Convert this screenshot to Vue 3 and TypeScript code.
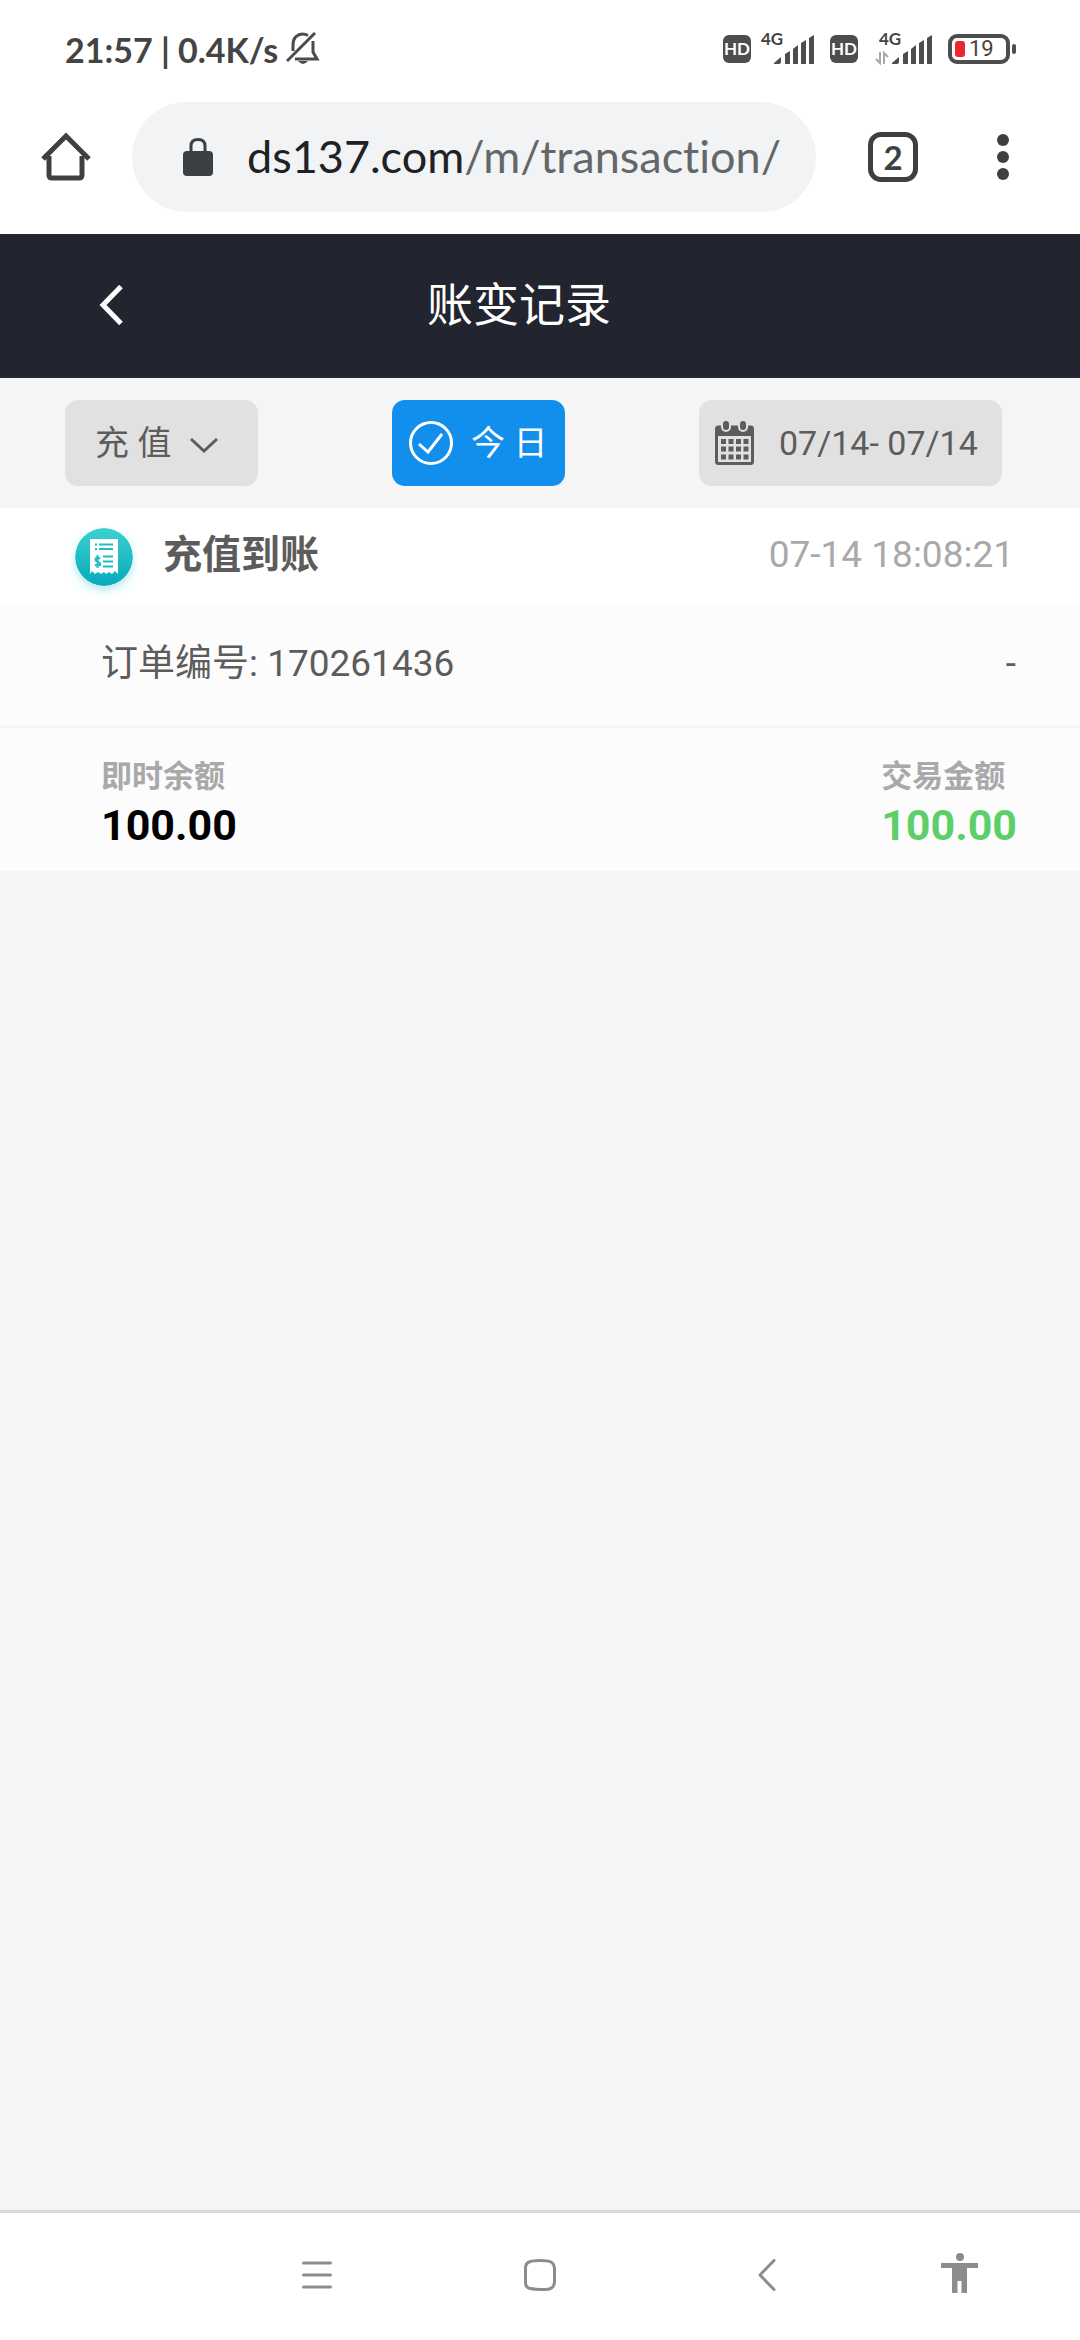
<script setup lang="ts">
import { ref } from 'vue'

interface TransactionRecord {
  title: string
  time: string
  orderNo: string
  remark: string
  balance: string
  amount: string
}

const kind = ref('deposit')
const todayOnly = ref(true)
const dateRange = ref('07/14- 07/14')

const records = ref<TransactionRecord[]>([
  {
    title: '充值到账',
    time: '07-14 18:08:21',
    orderNo: '170261436',
    remark: '-',
    balance: '100.00',
    amount: '100.00',
  },
])
</script>

<template>
  <div class="screen">
    <div class="status">
      <div class="status-left">
        <span>21:57 | 0.4K/s</span>
        <svg class="bell" viewBox="0 0 34 34" aria-hidden="true">
          <path d="M22 3.500Q15 0 9.500 5Q7 8 7 13V19M27 9V20L31 27H9" fill="none" stroke="#4b4b4b" stroke-width="3" />
          <path d="M1 29L29 1" stroke="#4b4b4b" stroke-width="3" />
          <path d="M12 29H22Q17 35 12 29Z" fill="#4b4b4b" />
        </svg>
      </div>
      <div class="status-right">
        <span class="hd">HD</span>
        <div class="signal">
          <span class="net">4G</span>
          <svg class="bars" viewBox="0 0 54 32" aria-hidden="true">
            <g fill="#4d4d4d">
              <path d="M14 30L21 24V29Q21 31 19 31H14Z" />
              <path d="M25 21L30 18V31H25ZM33 16L38 12V31H33ZM41 10L46 7V31H41ZM49 5L54 2V31H49Z" />
            </g>
          </svg>
        </div>
        <span class="hd second">HD</span>
        <div class="signal">
          <span class="net">4G</span>
          <svg class="bars" viewBox="0 0 54 32" aria-hidden="true">
            <g fill="#4d4d4d">
              <path d="M14 30L21 24V29Q21 31 19 31H14Z" />
              <path d="M25 21L30 18V31H25ZM33 16L38 12V31H33ZM41 10L46 7V31H41ZM49 5L54 2V31H49Z" />
            </g>
            <path d="M2 19V30L-2 26M6 31V20L10 24" fill="none" stroke="#a8a8a8" stroke-width="2" />
          </svg>
        </div>
        <div class="battery"><i class="charge"></i><span>19</span></div>
      </div>
    </div>

    <div class="browser">
      <button class="tool home" type="button" aria-label="Home">
        <svg viewBox="0 0 50 50" width="50" height="50">
          <path d="M8 24V43Q8 46 11 46H38Q41 46 41 43V24" fill="none" stroke="#3c4043" stroke-width="5" />
          <path d="M2 27L25 4L48 27" fill="none" stroke="#3c4043" stroke-width="5" />
        </svg>
      </button>
      <button class="address" type="button">
        <svg viewBox="0 0 30 40" width="30" height="40" aria-hidden="true">
          <rect x="0" y="14" width="30" height="25" rx="4" fill="#3c4043" />
          <path d="M8 15V9Q8 2.500 15 2.500T22 9V15" fill="none" stroke="#3c4043" stroke-width="3" />
        </svg>
        <span class="url">ds137.com<span class="path">/m/transaction/</span></span>
      </button>
      <button class="tabs" type="button">2</button>
      <button class="tool menu" type="button" aria-label="Menu">
        <svg viewBox="0 0 12 46" width="12" height="46">
          <g fill="#3c4043">
            <circle cx="6" cy="6" r="6" /><circle cx="6" cy="23" r="6" /><circle cx="6" cy="40" r="6" />
          </g>
        </svg>
      </button>
    </div>

    <header class="header">
      <button class="tool back" type="button" aria-label="返回">
        <svg viewBox="0 0 24 40" width="24" height="40">
          <path d="M22 1.500L4 20L22 38.500" fill="none" stroke="#fff" stroke-width="5" />
        </svg>
      </button>
      <h1>账变记录</h1>
    </header>

    <main class="content">
      <div class="filters">
        <div class="kind">
          <select v-model="kind" aria-label="类型">
            <option value="deposit">充 值</option>
          </select>
          <svg class="caret" viewBox="0 0 28 16" aria-hidden="true">
            <path d="M1 2L14 14L27 2" fill="none" stroke="#5c5c5c" stroke-width="3" />
          </svg>
        </div>
        <button class="today" type="button" :aria-pressed="todayOnly" @click="todayOnly = !todayOnly">
          <svg viewBox="0 0 44 44" width="44" height="44" aria-hidden="true">
            <circle cx="22" cy="22" r="20.500" fill="none" stroke="#fff" stroke-width="3" />
            <path d="M10 23L19 31L33 13" fill="none" stroke="#fff" stroke-width="3" />
          </svg>
          <span>今 日</span>
        </button>
        <button class="range" type="button">
          <svg viewBox="0 0 40 44" width="40" height="44" aria-hidden="true">
            <rect x="1.500" y="6" width="36" height="36.500" rx="2" fill="none" stroke="#5c5c5c" stroke-width="3" />
            <rect x="1" y="5" width="37" height="10" fill="#5c5c5c" />
            <rect x="6" y="-1" width="10" height="12" rx="5" fill="#e1e1e1" />
            <rect x="23" y="-1" width="10" height="12" rx="5" fill="#e1e1e1" />
            <rect x="8" y="0" width="6" height="9" rx="3" fill="#5c5c5c" />
            <rect x="25" y="0" width="6" height="9" rx="3" fill="#5c5c5c" />
            <path d="M6 20.500H34M6 28H34M6 36H34" stroke="#5c5c5c" stroke-width="5" stroke-dasharray="5 2.500" />
          </svg>
          <span>{{ dateRange }}</span>
        </button>
      </div>

      <article v-for="record in records" :key="record.orderNo" class="record">
        <div class="record-head">
          <svg class="receipt" viewBox="0 0 58 58" aria-hidden="true">
            <defs>
              <linearGradient id="teal" x1="0" y1="0" x2="0" y2="1">
                <stop offset="0" stop-color="#3fd0cf" />
                <stop offset="1" stop-color="#06a9bc" />
              </linearGradient>
            </defs>
            <circle cx="29" cy="29" r="29" fill="url(#teal)" />
            <path d="M15 11H43V46L40 43L37 46L34 44L31 46L29 44L26 46L23 44L20 46L17 43L15 46Z" fill="#fff" />
            <path d="M20 16.500H22M24 16.500H38M20 21H22M24 21H38M28 28.500H38M28 33.500H38M28 38.500H38" stroke="#1fbcc5" stroke-width="2" />
            <path d="M25 31Q24 29.500 22.500 29.500Q20 30 20.500 32Q21 33 23 34Q26 35 25 37Q22 39 20 36.500M22.500 27V40" fill="none" stroke="#1fbcc5" stroke-width="2" />
          </svg>
          <h2>{{ record.title }}</h2>
          <time>{{ record.time }}</time>
        </div>
        <div class="order">
          <span>订单编号: {{ record.orderNo }}</span>
          <span>{{ record.remark }}</span>
        </div>
        <dl class="sums">
          <div>
            <dt>即时余额</dt>
            <dd>{{ record.balance }}</dd>
          </div>
          <div>
            <dt>交易金额</dt>
            <dd class="gain">{{ record.amount }}</dd>
          </div>
        </dl>
      </article>
    </main>

    <nav class="system">
      <button class="tool" type="button" aria-label="Recents">
        <svg viewBox="0 0 32 32" width="32" height="32">
          <path d="M2.500 4H29.500M2.500 16H29.500M2.500 28H29.500" stroke="#8c8c8c" stroke-width="3" stroke-linecap="round" />
        </svg>
      </button>
      <button class="tool" type="button" aria-label="Home screen">
        <svg viewBox="0 0 32 32" width="32" height="32">
          <path d="M16 1.500Q24 1.500 27 3T30.500 9V23Q30.500 27 27.500 29T16 30.500T4.500 29T1.500 23V9Q1.500 4.500 5 3T16 1.500Z" fill="none" stroke="#8c8c8c" stroke-width="3" />
        </svg>
      </button>
      <button class="tool" type="button" aria-label="Back">
        <svg viewBox="0 0 18 32" width="18" height="32">
          <path d="M16 1.500L2 16L16 30.500" fill="none" stroke="#8c8c8c" stroke-width="3" stroke-linecap="round" stroke-linejoin="round" />
        </svg>
      </button>
      <button class="tool person" type="button" aria-label="Accessibility">
        <svg viewBox="0 0 37 44" width="37" height="44">
          <circle cx="19" cy="4" r="4" fill="#8c8c8c" />
          <path d="M0 10H37V15H26V40H20.500V28H16.500V40H11V15H0Z" fill="#8c8c8c" />
        </svg>
      </button>
    </nav>
  </div>
</template>

<style>
body {
  background: #f5f5f5;
}
</style>

<style scoped>
.screen {
  display: flex;
  flex-direction: column;
  min-height: 100vh;
  background: #f5f5f5;
  color: #5c5c5c;
  font-family: Roboto, "Noto Sans CJK SC", sans-serif;
}

.screen * {
  box-sizing: border-box;
}

button,
select {
  margin: 0;
  padding: 0;
  border: 0;
  background: none;
  color: inherit;
  font: inherit;
}

svg {
  display: block;
  flex: none;
}

.tool {
  display: flex;
  align-items: center;
  justify-content: center;
}

h1,
h2,
dl,
dd {
  margin: 0;
}

.status {
  display: flex;
  align-items: center;
  justify-content: space-between;
  height: 98px;
  padding: 0 64px 0 65px;
  background: #fff;
  color: #444;
  font-family: Lato, sans-serif;
}

.status-left {
  display: flex;
  align-items: center;
  gap: 8px;
  font-size: 34px;
  font-weight: 700;
  white-space: nowrap;
}

.bell {
  width: 34px;
  height: 34px;
}

.status-right {
  display: flex;
  align-items: center;
}

.hd {
  width: 28px;
  height: 28px;
  border-radius: 6px;
  background: #4d4d4d;
  color: #fff;
  font-size: 17px;
  font-weight: 700;
  line-height: 28px;
  text-align: center;
}

.second {
  margin-left: 16px;
}

.signal {
  position: relative;
  margin-left: 9px;
}

.net {
  position: absolute;
  top: -2px;
  left: 1px;
  font-size: 17px;
  font-weight: 700;
  line-height: 16px;
}

.bars {
  width: 54px;
  height: 32px;
  overflow: visible;
}

.second + .signal {
  margin-left: 20px;
}

.battery {
  position: relative;
  display: flex;
  align-items: center;
  gap: 4px;
  width: 62px;
  height: 30px;
  margin: 0 6px 0 16px;
  padding: 0 3px;
  border: 4px solid #4d4d4d;
  border-radius: 9px;
  font-family: Roboto, sans-serif;
  font-size: 22px;
  line-height: 22px;
}

.battery::after {
  position: absolute;
  top: 6px;
  right: -10px;
  width: 4px;
  height: 10px;
  border-radius: 2px;
  background: #4d4d4d;
  content: "";
}

.charge {
  width: 10px;
  height: 16px;
  border-radius: 3px;
  background: #e8292d;
}

.browser {
  display: flex;
  align-items: center;
  height: 136px;
  padding: 0 71px 18px 41px;
  background: #fff;
  color: #3c4043;
  font-family: Lato, sans-serif;
}

.address {
  display: flex;
  flex: 1;
  align-items: center;
  gap: 34px;
  min-width: 0;
  height: 110px;
  margin: 0 52px 0 41px;
  padding: 0 28px 0 51px;
  border-radius: 55px;
  background: #f1f3f4;
}

.url {
  overflow: hidden;
  padding-bottom: 2px;
  color: #202124;
  font-size: 45px;
  font-variant-ligatures: none;
  line-height: 60px;
  white-space: nowrap;
}

.path {
  color: #64676a;
}

.tabs {
  width: 50px;
  height: 50px;
  margin-right: 79px;
  border: 5px solid #3c4043;
  border-radius: 13px;
  font-size: 33px;
  font-weight: 700;
  line-height: 40px;
  text-align: center;
}

.header {
  display: grid;
  grid-template-columns: 222px 1fr 264px;
  align-items: center;
  height: 144px;
  padding-bottom: 2px;
  background: #22242f;
  color: #fff;
}

.header h1 {
  font-size: 46px;
  font-weight: 400;
  line-height: 60px;
  text-align: center;
}

.content {
  flex: 1;
}

.filters {
  display: flex;
  align-items: center;
  justify-content: space-between;
  height: 130px;
  padding: 0 78px 0 65px;
  font-size: 34px;
}

.kind {
  position: relative;
}

.kind select,
.today,
.range {
  height: 86px;
  border-radius: 13px;
  background: #e1e1e1;
  line-height: 40px;
  white-space: nowrap;
}

.kind select {
  width: 193px;
  padding: 0 30px;
  appearance: none;
}

.caret {
  position: absolute;
  top: 37px;
  right: 40px;
  width: 28px;
  height: 16px;
  pointer-events: none;
}

.today,
.range {
  display: flex;
  align-items: center;
}

.today {
  gap: 18px;
  width: 173px;
  padding-left: 17px;
  background: #128eec;
  color: #fff;
}

.range {
  gap: 24px;
  width: 303px;
  padding-left: 16px;
}

.record-head {
  display: flex;
  align-items: center;
  height: 97px;
  padding: 0 66px 0 75px;
  background: #fff;
}

.receipt {
  width: 58px;
  height: 58px;
  border-radius: 50%;
  box-shadow: 0 4px 8px #b5e9ef;
}

.record-head h2,
.record-head time {
  padding-bottom: 3px;
  line-height: 60px;
}

.record-head h2 {
  margin-left: 30px;
  font-size: 39px;
  font-weight: 700;
}

.record-head time {
  margin-left: auto;
  color: #a9a9a9;
  font-size: 37px;
}

.order {
  display: flex;
  justify-content: space-between;
  padding: 29px 64px 32px 101px;
  border-bottom: 2px solid #f5f5f5;
  background: #fcfcfc;
  font-size: 37px;
  line-height: 60px;
}

.sums {
  display: flex;
  justify-content: space-between;
  padding: 25px 63px 22px 101px;
  background: #fcfcfc;
  font-weight: 700;
}

.sums dt {
  color: #a9a9a9;
  font-size: 31px;
  line-height: 48px;
}

.sums dd {
  color: #000;
  font-size: 43px;
  line-height: 48px;
}

.sums .gain {
  color: #5ccf6b;
}

.system {
  display: grid;
  grid-template-columns: 224fr 222fr 232fr 153fr;
  height: 130px;
  padding: 0 44px 4px 205px;
  border-top: 3px solid #d8d8d8;
  background: #fff;
}
</style>
